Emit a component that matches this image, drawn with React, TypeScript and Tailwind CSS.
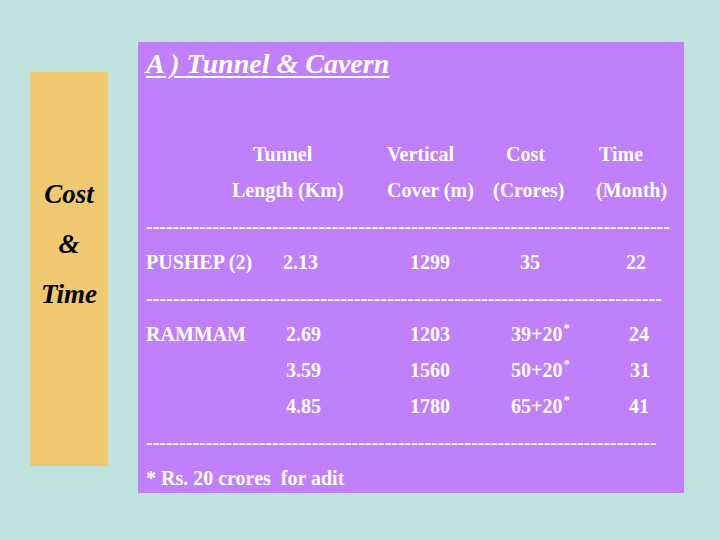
const dash1 = '-'.repeat(79);
const dash2 = '-'.repeat(77);
const dash3 = '-'.repeat(77);

const Star = () => <span className="text-[13px] leading-none align-top relative top-[5px] ml-[1px]">*</span>;

export default function App() {
  return (
    <div className="w-[720px] h-[540px] bg-[#bfe4df] flex items-start font-['Liberation_Serif',serif] overflow-hidden">
      <div className="ml-[30px] mt-[72px] w-[78px] h-[394px] bg-[#f0c870] flex flex-col items-center pt-[97px] text-[27px] leading-[50px] font-bold italic text-black">
        <span>Cost</span>
        <span>&amp;</span>
        <span>Time</span>
      </div>
      <div className="ml-[30px] mt-[42px] w-[546px] h-[451px] bg-[#c080fb] text-white font-bold text-[20px] leading-[36px]">
        <div className="pt-[8px] pl-[8px] text-[28px] leading-[28px] italic underline decoration-2 underline-offset-[3px]">
          A ) Tunnel &amp; Cavern
        </div>
        <div className="mt-[58px] flex pl-[115px]">
          <span className="w-[134px]">Tunnel</span>
          <span className="w-[119px]">Vertical</span>
          <span className="w-[93px]">Cost</span>
          <span>Time</span>
        </div>
        <div className="flex pl-[94px]">
          <span className="w-[155px]">Length (Km)</span>
          <span className="w-[106px]">Cover (m)</span>
          <span className="w-[103px]">(Crores)</span>
          <span>(Month)</span>
        </div>
        <div className="pl-[8px] whitespace-nowrap tracking-[-0.03px]">{dash1}</div>
        <div className="flex pl-[8px]">
          <span className="w-[137px]">PUSHEP (2)</span>
          <span className="w-[127px]">2.13</span>
          <span className="w-[110px]">1299</span>
          <span className="w-[106px]">35</span>
          <span>22</span>
        </div>
        <div className="pl-[8px] whitespace-nowrap tracking-[0.04px]">{dash2}</div>
        <div className="flex pl-[8px]">
          <span className="w-[140px]">RAMMAM</span>
          <span className="w-[124px]">2.69</span>
          <span className="w-[101px]">1203</span>
          <span className="w-[118px]">
            39+20
            <Star />
          </span>
          <span>24</span>
        </div>
        <div className="flex pl-[148px]">
          <span className="w-[124px]">3.59</span>
          <span className="w-[101px]">1560</span>
          <span className="w-[119px]">
            50+20
            <Star />
          </span>
          <span>31</span>
        </div>
        <div className="flex pl-[148px]">
          <span className="w-[124px]">4.85</span>
          <span className="w-[101px]">1780</span>
          <span className="w-[118px]">
            65+20
            <Star />
          </span>
          <span>41</span>
        </div>
        <div className="pl-[8px] whitespace-nowrap tracking-[-0.03px]">{dash3}</div>
        <div className="pl-[8px] whitespace-pre">* Rs. 20 crores  for adit</div>
      </div>
    </div>
  );
}
